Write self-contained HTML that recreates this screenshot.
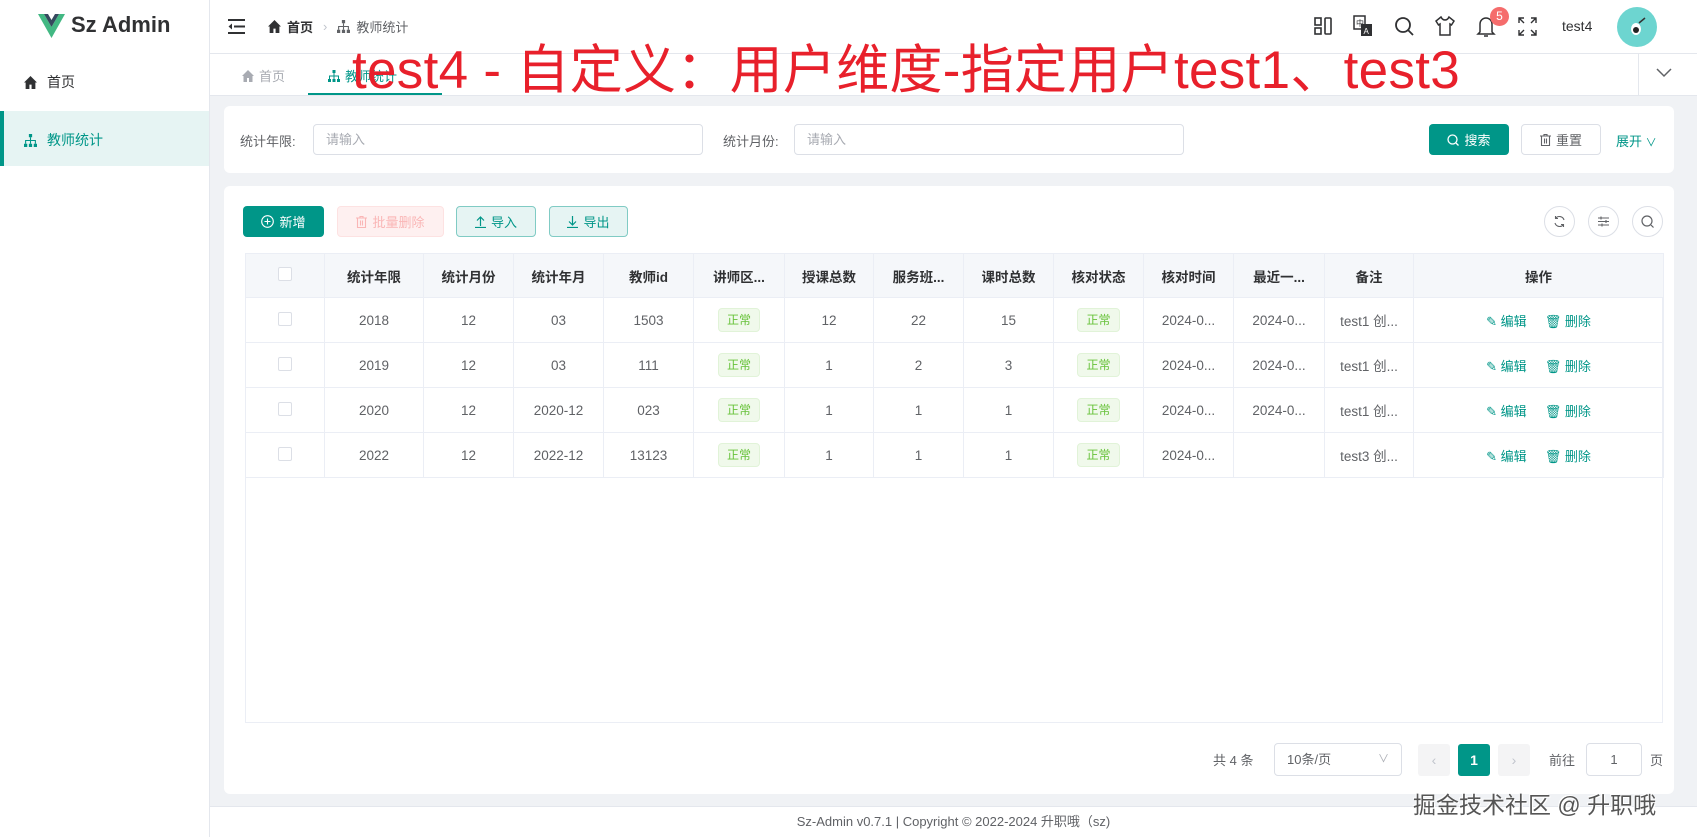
<!DOCTYPE html>
<html><head><meta charset="utf-8"><style>
*{box-sizing:border-box;margin:0;padding:0}
body{width:1697px;height:837px;overflow:hidden;font-family:"Liberation Sans","Noto Sans CJK SC",sans-serif;font-size:14px;color:#303133;background:#f0f2f5;position:relative}
.abs{position:absolute}
.side{left:0;top:0;width:210px;height:837px;background:#fff;border-right:1px solid #e4e7ed}
.hdr{left:210px;top:0;width:1487px;height:54px;background:#fff;border-bottom:1px solid #e4e7ed}
.tabs{left:210px;top:54px;width:1487px;height:42px;background:#fff;border-bottom:1px solid #e4e7ed}
.card{background:#fff;border-radius:6px}
.inp{border:1px solid #dcdfe6;border-radius:4px;height:31px;color:#a8abb2;font-size:13px;padding-left:12px;line-height:29px}
.btn{height:31px;border-radius:4px;font-size:13px;display:flex;align-items:center;justify-content:center;gap:5px}
table{border-collapse:collapse;table-layout:fixed}
td,th{border:1px solid #ebeef5;text-align:center;font-size:13.5px;color:#606266;height:45px;white-space:nowrap;overflow:hidden}
th{background:#f5f7fa;color:#303133;font-weight:bold;height:44px}
.cb{display:inline-block;width:14px;height:14px;border:1px solid #dcdfe6;border-radius:2px;background:#fff}
.tag{display:inline-block;background:#f0f9eb;border:1px solid #e1f3d8;color:#67c23a;font-size:12px;padding:0 8px;height:24px;line-height:22px;border-radius:4px}
.op{color:#009688;font-size:13px}
.circ{width:31px;height:31px;border:1px solid #dcdfe6;border-radius:50%;display:flex;align-items:center;justify-content:center}
</style></head><body>
<div class="abs side">
  <svg class="abs" style="left:38px;top:14px" width="27" height="24" viewBox="0 0 27 24"><path d="M0 0h6l7.5 13L21 0h6L13.5 24z" fill="#42b883"/><path d="M6 0h4l3.5 6L17 0h4l-7.5 13z" fill="#35495e"/></svg>
  <div class="abs" style="left:71px;top:12px;font-size:22px;font-weight:bold;color:#303133">Sz Admin</div>
  <div class="abs" style="left:24px;top:72px;font-size:14px;display:flex;gap:10px;align-items:center"><svg width="13" height="13" viewBox="0 0 12 12"><path d="M6 0L0 6h1.5v6h3.5v-4h2v4h3.5V6H12z" fill="#303133"/></svg>首页</div>
  <div class="abs" style="left:0;top:111px;width:209px;height:55px;background:#e6f4f3;border-left:4px solid #009688"></div>
  <div class="abs" style="left:24px;top:130px;font-size:14px;color:#009688;display:flex;gap:10px;align-items:center"><svg width="13" height="13" viewBox="0 0 12 12" fill="#009688"><rect x="4.5" y="0" width="3" height="3"/><rect x="0" y="9" width="3" height="3"/><rect x="4.5" y="9" width="3" height="3"/><rect x="9" y="9" width="3" height="3"/><path d="M5.5 3h1v2.5h4.5v3.5h-1V6.5h-3.5v2.5h-1V6.5H2v2.5H1V5.5h4.5z"/></svg>教师统计</div>
</div>
<div class="abs hdr">
  <svg class="abs" style="left:18px;top:19px" width="17" height="15" viewBox="0 0 17 15"><path d="M0 1h17M6 7.5h11M0 14h17" stroke="#303133" stroke-width="2"/><path d="M4 4.5L0.5 7.5 4 10.5z" fill="#303133"/></svg>
  <div class="abs" style="left:58px;top:17px;font-size:13px;display:flex;align-items:center;gap:6px"><svg width="13" height="13" viewBox="0 0 12 12"><path d="M6 0L0 6h1.5v6h3.5v-4h2v4h3.5V6H12z" fill="#303133"/></svg><b>首页</b><span style="color:#c0c4cc;margin:0 4px">›</span><svg width="13" height="13" viewBox="0 0 12 12" fill="#606266"><rect x="4.5" y="0" width="3" height="3"/><rect x="0" y="9" width="3" height="3"/><rect x="4.5" y="9" width="3" height="3"/><rect x="9" y="9" width="3" height="3"/><path d="M5.5 3h1v2.5h4.5v3.5h-1V6.5h-3.5v2.5h-1V6.5H2v2.5H1V5.5h4.5z"/></svg><span style="color:#606266">教师统计</span></div>
  <svg class="abs" style="left:1103px;top:16px" width="20" height="20" viewBox="0 0 20 20" fill="none" stroke="#303133" stroke-width="1.6"><rect x="2" y="2" width="6" height="7"/><rect x="2" y="12" width="6" height="6"/><rect x="12" y="2" width="6" height="16" rx="1"/></svg>
  <svg class="abs" style="left:1143px;top:15px" width="20" height="22" viewBox="0 0 20 22"><rect x="1" y="1" width="11" height="13" fill="#fff" stroke="#303133" stroke-width="1.5"/><text x="3" y="11" font-size="8" fill="#303133">中</text><rect x="8" y="9" width="11" height="12" fill="#303133"/><text x="10.5" y="19" font-size="8" fill="#fff">A</text></svg>
  <svg class="abs" style="left:1184px;top:16px" width="21" height="21" viewBox="0 0 21 21" fill="none" stroke="#303133" stroke-width="1.8"><circle cx="9" cy="9" r="7"/><path d="M14 14l5 5"/></svg>
  <svg class="abs" style="left:1224px;top:15px" width="22" height="22" viewBox="0 0 22 22" fill="none" stroke="#303133" stroke-width="1.5"><path d="M7 2L2 6l2.5 4L6 9v11h10V9l1.5 1L20 6l-5-4c-1 2-2.5 3-4 3S8 4 7 2z"/></svg>
  <svg class="abs" style="left:1266px;top:15px" width="20" height="23" viewBox="0 0 20 23" fill="none" stroke="#303133" stroke-width="1.5"><path d="M4 17V9a6 6 0 0112 0v8l2 2H2z"/><path d="M8 21h4"/></svg>
  <div class="abs" style="left:1280px;top:7px;width:19px;height:19px;border-radius:50%;background:#f56c6c;color:#fff;font-size:12px;text-align:center;line-height:19px">5</div>
  <svg class="abs" style="left:1308px;top:17px" width="19" height="19" viewBox="0 0 19 19" fill="none" stroke="#303133" stroke-width="1.4"><path d="M1 6V1h5M13 1h5v5M18 13v5h-5M6 18H1v-5M1 1l5 5M18 1l-5 5M18 18l-5-5M1 18l5-5"/></svg>
  <div class="abs" style="left:1352px;top:18px;font-size:14px">test4</div>
  <div class="abs" style="left:1407px;top:7px;width:40px;height:40px;border-radius:50%;background:#6dd5d0"></div>
  <svg class="abs" style="left:1417px;top:15px" width="20" height="24" viewBox="0 0 20 24"><ellipse cx="9" cy="14" rx="5" ry="6" fill="#fff"/><circle cx="9" cy="15" r="3" fill="#222"/><path d="M12 8l6-5" stroke="#333" stroke-width="1.5"/></svg>
</div>
<div class="abs tabs">
  <div class="abs" style="left:32px;top:12px;font-size:13px;color:#a8abb2;display:flex;gap:5px;align-items:center"><svg width="12" height="12" viewBox="0 0 12 12"><path d="M6 0L0 6h1.5v6h3.5v-4h2v4h3.5V6H12z" fill="#a8abb2"/></svg>首页</div>
  <div class="abs" style="left:118px;top:12px;font-size:13px;color:#009688;display:flex;gap:5px;align-items:center"><svg width="12" height="12" viewBox="0 0 12 12" fill="#009688"><rect x="4.5" y="0" width="3" height="3"/><rect x="0" y="9" width="3" height="3"/><rect x="4.5" y="9" width="3" height="3"/><rect x="9" y="9" width="3" height="3"/><path d="M5.5 3h1v2.5h4.5v3.5h-1V6.5h-3.5v2.5h-1V6.5H2v2.5H1V5.5h4.5z"/></svg>教师统计</div>
  <div class="abs" style="left:98px;top:39px;width:134px;height:2px;background:#009688"></div>
  <div class="abs" style="left:1428px;top:0;width:1px;height:41px;background:#e4e7ed"></div>
  <svg class="abs" style="left:1446px;top:14px" width="16" height="10" viewBox="0 0 16 10" fill="none" stroke="#606266" stroke-width="1.5"><path d="M1 1l7 7 7-7"/></svg>
</div>
<div class="abs" style="left:352px;top:40px;font-size:53px;color:#e8202b;white-space:nowrap;line-height:62px;letter-spacing:0.3px">test4 - 自定义：用户维度-指定用户test1、test3</div>

<div class="abs card" style="left:224px;top:106px;width:1450px;height:67px"></div>
<div class="abs" style="left:240px;top:131px;font-size:13px;color:#606266">统计年限:</div>
<div class="abs inp" style="left:313px;top:124px;width:390px">请输入</div>
<div class="abs" style="left:723px;top:131px;font-size:13px;color:#606266">统计月份:</div>
<div class="abs inp" style="left:794px;top:124px;width:390px">请输入</div>
<div class="abs btn" style="left:1429px;top:124px;width:80px;background:#009688;color:#fff"><svg width="12" height="12" viewBox="0 0 12 12" fill="none" stroke="#fff" stroke-width="1.3"><circle cx="5.5" cy="5.5" r="4.5"/><path d="M9 9l2.5 2.5"/></svg>搜索</div>
<div class="abs btn" style="left:1521px;top:124px;width:80px;border:1px solid #dcdfe6;color:#606266"><svg width="11" height="12" viewBox="0 0 11 12" fill="none" stroke="#606266" stroke-width="1.1"><path d="M0 2h11M4 2V0.5h3V2M1.5 2v9.5h8V2M4.5 4.5v5M6.5 4.5v5"/></svg>重置</div>
<div class="abs" style="left:1616px;top:131px;font-size:13px;color:#009688">展开 <span style="font-size:11px">∨</span></div>

<div class="abs card" style="left:224px;top:186px;width:1450px;height:608px"></div>
<div class="abs btn" style="left:243px;top:206px;width:81px;background:#009688;color:#fff"><svg width="13" height="13" viewBox="0 0 13 13" fill="none" stroke="#fff" stroke-width="1.1"><circle cx="6.5" cy="6.5" r="5.8"/><path d="M6.5 3.5v6M3.5 6.5h6"/></svg>新增</div>
<div class="abs btn" style="left:337px;top:206px;width:107px;background:#fef0f0;border:1px solid #fde2e2;color:#fab6b6"><svg width="11" height="12" viewBox="0 0 11 12" fill="none" stroke="#fab6b6" stroke-width="1.1"><path d="M0 2h11M4 2V0.5h3V2M1.5 2v9.5h8V2M4.5 4.5v5M6.5 4.5v5"/></svg>批量删除</div>
<div class="abs btn" style="left:456px;top:206px;width:80px;background:#e6f4f3;border:1px solid #80cbc4;color:#009688"><svg width="11" height="12" viewBox="0 0 11 12" fill="none" stroke="#009688" stroke-width="1.2"><path d="M5.5 10V1M2 4.5l3.5-3.5 3.5 3.5M0 11.5h11"/></svg>导入</div>
<div class="abs btn" style="left:549px;top:206px;width:79px;background:#e6f4f3;border:1px solid #80cbc4;color:#009688"><svg width="11" height="12" viewBox="0 0 11 12" fill="none" stroke="#009688" stroke-width="1.2"><path d="M5.5 0v9M2 5.5l3.5 3.5 3.5-3.5M0 11.5h11"/></svg>导出</div>
<div class="abs circ" style="left:1544px;top:206px"><svg width="13" height="13" viewBox="0 0 13 13" fill="none" stroke="#606266" stroke-width="1.1"><path d="M11 5A4.8 4.8 0 002.5 3.5M2 8a4.8 4.8 0 008.5 1.5M2.5 1v2.5H5M10.5 12V9.5H8"/></svg></div>
<div class="abs circ" style="left:1588px;top:206px"><svg width="13" height="13" viewBox="0 0 13 13" fill="none" stroke="#606266" stroke-width="1.1"><path d="M1 3h11M1 6.5h11M1 10h11M4 1.5v3M9 5v3M5 8.5v3"/></svg></div>
<div class="abs circ" style="left:1632px;top:206px"><svg width="13" height="13" viewBox="0 0 13 13" fill="none" stroke="#606266" stroke-width="1.2"><circle cx="6" cy="6" r="5"/><path d="M10 10l2.5 2.5"/></svg></div>

<div class="abs" style="left:245px;top:253px;width:1418px;height:470px;border:1px solid #ebeef5;border-top:none"></div>
<table class="abs" style="left:245px;top:253px;width:1418px">
<colgroup><col style="width:79px"><col style="width:99px"><col style="width:90px"><col style="width:90px"><col style="width:90px"><col style="width:91px"><col style="width:89px"><col style="width:90px"><col style="width:90px"><col style="width:90px"><col style="width:90px"><col style="width:91px"><col style="width:89px"><col style="width:250px"></colgroup>
<tr><th><span class="cb"></span></th><th>统计年限</th><th>统计月份</th><th>统计年月</th><th>教师id</th><th>讲师区...</th><th>授课总数</th><th>服务班...</th><th>课时总数</th><th>核对状态</th><th>核对时间</th><th>最近一...</th><th>备注</th><th>操作</th></tr>
<tr><td><span class="cb"></span></td><td>2018</td><td>12</td><td>03</td><td>1503</td><td><span class="tag">正常</span></td><td>12</td><td>22</td><td>15</td><td><span class="tag">正常</span></td><td>2024-0...</td><td>2024-0...</td><td>test1 创...</td><td class="op">✎ 编辑 &nbsp;&nbsp;&nbsp; 🗑 删除</td></tr>
<tr><td><span class="cb"></span></td><td>2019</td><td>12</td><td>03</td><td>111</td><td><span class="tag">正常</span></td><td>1</td><td>2</td><td>3</td><td><span class="tag">正常</span></td><td>2024-0...</td><td>2024-0...</td><td>test1 创...</td><td class="op">✎ 编辑 &nbsp;&nbsp;&nbsp; 🗑 删除</td></tr>
<tr><td><span class="cb"></span></td><td>2020</td><td>12</td><td>2020-12</td><td>023</td><td><span class="tag">正常</span></td><td>1</td><td>1</td><td>1</td><td><span class="tag">正常</span></td><td>2024-0...</td><td>2024-0...</td><td>test1 创...</td><td class="op">✎ 编辑 &nbsp;&nbsp;&nbsp; 🗑 删除</td></tr>
<tr><td><span class="cb"></span></td><td>2022</td><td>12</td><td>2022-12</td><td>13123</td><td><span class="tag">正常</span></td><td>1</td><td>1</td><td>1</td><td><span class="tag">正常</span></td><td>2024-0...</td><td></td><td>test3 创...</td><td class="op">✎ 编辑 &nbsp;&nbsp;&nbsp; 🗑 删除</td></tr>
</table>

<div class="abs" style="left:1213px;top:750px;font-size:13px;color:#606266">共 4 条</div>
<div class="abs inp" style="left:1274px;top:743px;width:128px;height:33px;line-height:31px;color:#606266">10条/页<span style="position:absolute;right:12px;color:#a8abb2;font-size:11px">∨</span></div>
<div class="abs" style="left:1418px;top:744px;width:32px;height:32px;background:#f4f4f5;border-radius:3px;color:#c0c4cc;text-align:center;line-height:32px">‹</div>
<div class="abs" style="left:1458px;top:744px;width:32px;height:32px;background:#009688;border-radius:3px;color:#fff;text-align:center;line-height:32px;font-weight:bold">1</div>
<div class="abs" style="left:1498px;top:744px;width:32px;height:32px;background:#f4f4f5;border-radius:3px;color:#c0c4cc;text-align:center;line-height:32px">›</div>
<div class="abs" style="left:1549px;top:750px;font-size:13px;color:#606266">前往</div>
<div class="abs inp" style="left:1586px;top:743px;width:56px;height:33px;text-align:center;padding:0;line-height:31px;color:#606266">1</div>
<div class="abs" style="left:1650px;top:750px;font-size:13px;color:#606266">页</div>

<div class="abs" style="left:210px;top:806px;width:1487px;height:31px;background:#fff;border-top:1px solid #e4e7ed;text-align:center;font-size:13px;color:#606266;line-height:30px">Sz-Admin v0.7.1 | Copyright © 2022-2024 升职哦（sz)</div>
<div class="abs" style="left:1413px;top:786px;font-size:23px;color:#555;text-shadow:1px 1px 0 #fff,-1px -1px 0 #fff;white-space:nowrap">掘金技术社区 @ 升职哦</div>
</body></html>
